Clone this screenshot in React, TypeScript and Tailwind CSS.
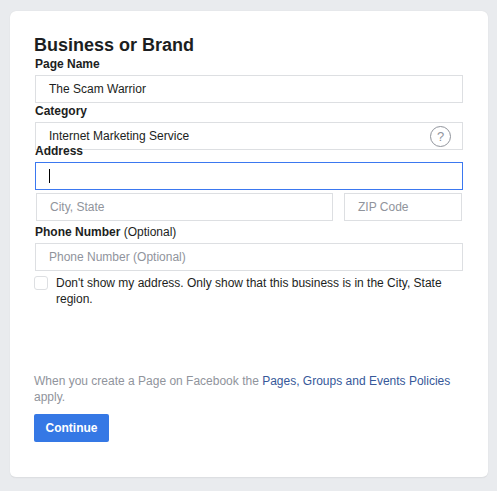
import type { ReactNode } from "react";

function Field({ value, placeholder, className = "", children }: { value?: string; placeholder?: string; className?: string; children?: ReactNode }) {
  return (
    <div className={`h-[28px] flex items-center pl-[13px] border border-[#dddfe2] text-[12px] ${value ? "text-[#1c1e21]" : "text-[#90949c]"} ${className}`}>
      {value || placeholder}
      {children}
    </div>
  );
}

function Label({ children, className = "" }: { children: ReactNode; className?: string }) {
  return <div className={`text-[12px] leading-[16px] font-bold text-[#1c1e21] ${className}`}>{children}</div>;
}

function HelpIcon() {
  return (
    <div className="ml-auto mr-[11px] w-[21px] h-[21px] rounded-full border border-[#90949c] flex items-center justify-center text-[13px] leading-none text-[#90949c]">
      ?
    </div>
  );
}

export default function App() {
  return (
    <div className="h-[491px] bg-[#e9ebee] pt-[11px] pl-[10px] font-['Liberation_Sans',Arial,sans-serif] overflow-hidden">
      <div className="w-[478px] h-[467px] bg-white rounded-[6px] border-b border-[#dddfe2] shadow-[0_0_1px_rgba(0,0,0,0.12)] pt-[24px] pl-[24px] flex flex-col">
        <h1 className="text-[18px] leading-[20px] font-bold text-[#1c1e21]">Business or Brand</h1>

        <div className="w-[429px] pl-[1px]">
          <Label className="mt-[1px] mb-[3px]">Page Name</Label>
          <Field value="The Scam Warrior" />

          <Label className="mb-[3px]">Category</Label>
          <Field value="Internet Marketing Service">
            <HelpIcon />
          </Field>

          <Label className="relative -mt-[7px] mb-[3px]">Address</Label>
          <Field className="!border-[#3b78f0]">
            <div className="w-[1px] h-[14px] bg-black" />
          </Field>

          <div className="flex gap-[11px] mt-[3px] ml-[1px] mr-[1px]">
            <Field placeholder="City, State" className="w-[297px]" />
            <Field placeholder="ZIP Code" className="w-[118px]" />
          </div>

          <div className="text-[12px] leading-[16px] text-[#1c1e21] mt-[3px] mb-[3px]">
            <span className="font-bold">Phone Number</span> (Optional)
          </div>
          <Field placeholder="Phone Number (Optional)" />
        </div>

        <div className="flex items-start w-[429px] mt-[4px]">
          <div className="w-[14px] h-[14px] mt-[1px] rounded-[3px] border border-[#dddfe2] bg-white shrink-0" />
          <p className="ml-[8px] text-[12px] leading-[16px] text-[#1c1e21]">
            Don't show my address. Only show that this business is in the City, State region.
          </p>
        </div>

        <p className="w-[429px] mt-[66px] text-[12px] leading-[16px] text-[#90949c]">
          When you create a Page on Facebook the <a className="text-[#365899]">Pages, Groups and Events Policies</a> apply.
        </p>

        <button className="w-[75px] h-[28px] mt-[9px] rounded-[2px] bg-[#3578e5] text-white text-[12px] font-bold">
          Continue
        </button>
      </div>
    </div>
  );
}
